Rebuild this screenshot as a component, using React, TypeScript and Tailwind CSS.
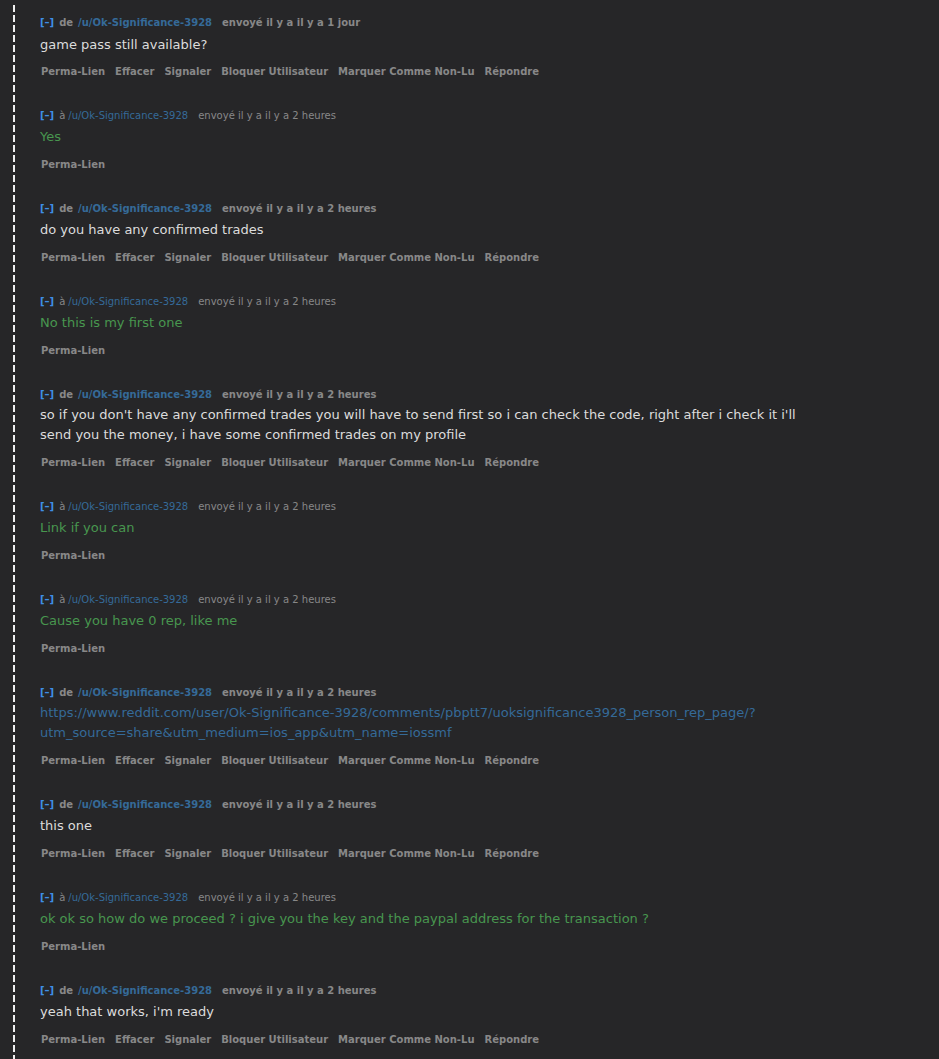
import React from 'react';

type Message = {
  dir: 'de' | 'à';
  when: string;
  lines: string[];
  link?: boolean;
};

const USER = '/u/Ok-Significance-3928';

const messages: Message[] = [
  { dir: 'de', when: 'il y a il y a 1 jour', lines: ['game pass still available?'] },
  { dir: 'à', when: 'il y a il y a 2 heures', lines: ['Yes'] },
  { dir: 'de', when: 'il y a il y a 2 heures', lines: ['do you have any confirmed trades'] },
  { dir: 'à', when: 'il y a il y a 2 heures', lines: ['No this is my first one'] },
  {
    dir: 'de',
    when: 'il y a il y a 2 heures',
    lines: [
      "so if you don't have any confirmed trades you will have to send first so i can check the code, right after i check it i'll",
      'send you the money, i have some confirmed trades on my profile',
    ],
  },
  { dir: 'à', when: 'il y a il y a 2 heures', lines: ['Link if you can'] },
  { dir: 'à', when: 'il y a il y a 2 heures', lines: ['Cause you have 0 rep, like me'] },
  {
    dir: 'de',
    when: 'il y a il y a 2 heures',
    link: true,
    lines: [
      'https://www.reddit.com/user/Ok-Significance-3928/comments/pbptt7/uoksignificance3928_person_rep_page/?',
      'utm_source=share&utm_medium=ios_app&utm_name=iossmf',
    ],
  },
  { dir: 'de', when: 'il y a il y a 2 heures', lines: ['this one'] },
  {
    dir: 'à',
    when: 'il y a il y a 2 heures',
    lines: ['ok ok so how do we proceed ? i give you the key and the paypal address for the transaction ?'],
  },
  { dir: 'de', when: 'il y a il y a 2 heures', lines: ["yeah that works, i'm ready"] },
];

const receivedActions = ['Perma-Lien', 'Effacer', 'Signaler', 'Bloquer Utilisateur', 'Marquer Comme Non-Lu', 'Répondre'];

const MessageRow: React.FC<{ msg: Message; first?: boolean }> = ({ msg, first }) => {
  const received = msg.dir === 'de';
  const actions = received ? receivedActions : ['Perma-Lien'];
  const bodyColor = msg.link ? 'text-[#356a98]' : received ? 'text-[#dcdcdc]' : 'text-[#48964f]';
  const multi = msg.lines.length > 1;

  return (
    <div className="pb-[28px]">
      {/* tagline */}
      <div className={`flex items-center h-4 leading-4 text-[10px] whitespace-nowrap ${received ? 'font-bold' : ''}`}>
        <span className="text-[#3f8fe6] font-bold">[–]</span>
        <span className="ml-[5px] text-[#888888]">{msg.dir}</span>
        <span className={`${received ? 'ml-[5px]' : 'ml-[3px]'} text-[#356a98]`}>{USER}</span>
        <span className="ml-[10px] text-[#888888]">envoyé {msg.when}</span>
      </div>
      <div
        className={`${first ? 'mt-[4px]' : multi ? 'mt-[2px]' : 'mt-[3px]'} text-[13px] leading-5 whitespace-nowrap ${bodyColor}`}
      >
        {msg.lines.map((l, i) => (
          <div key={i}>{l}</div>
        ))}
      </div>
      <ul className={`${first ? 'mt-[9px]' : 'mt-[10px]'} flex gap-[10px] h-4 leading-4 text-[10px] font-bold text-[#888888] pl-[1px]`}>
        {actions.map((a) => (
          <li key={a}>{a}</li>
        ))}
      </ul>
    </div>
  );
};

export default function App() {
  return (
    <div
      className="min-h-[1059px] w-full bg-[#262628] overflow-hidden flex"
      style={{ fontFamily: '"DejaVu Sans", Verdana, sans-serif' }}
    >
      <div className="ml-[13px] w-[2px] shrink-0 bg-[repeating-linear-gradient(to_bottom,#f0f0f0_0px,#f0f0f0_7px,transparent_7px,transparent_10px)] mt-[5px]" />
      <div className="pl-[25px] pt-[15px] flex-1">
        {messages.map((m, i) => (
          <MessageRow key={i} msg={m} first={i === 0} />
        ))}
      </div>
    </div>
  );
}
